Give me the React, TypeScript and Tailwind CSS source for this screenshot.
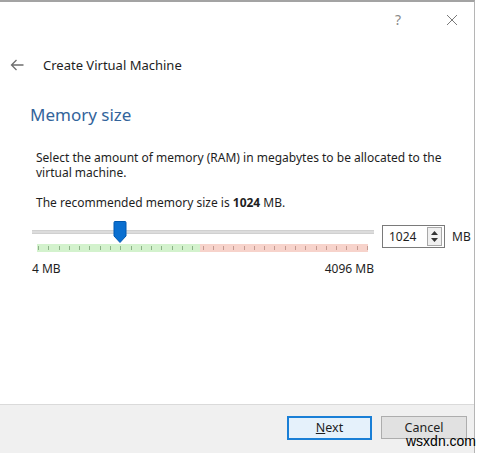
import React from "react";

const ticks = Array.from({ length: 33 }, (_, i) => i);

export default function App() {
  const font = { fontFamily: '"Noto Sans", "Open Sans", sans-serif' };
  return (
    <div className="w-[480px] h-[453px] bg-white relative overflow-hidden" style={font}>
      <div className="w-[475px] h-[453px] border-t-2 border-r border-t-[#a3a3a3] border-r-[#b5b5b5] flex flex-col text-[#1e1e1e]">
        {/* title bar */}
        <div className="h-[36px] flex items-center justify-end pr-[12px] gap-[34px] text-[#8a8a8a]">
          <div className="w-[20px] text-center text-[14px] leading-none">?</div>
          <div className="w-[20px] flex justify-center">
            <svg width="12" height="12" viewBox="0 0 12 12" stroke="#7a7a7a" strokeWidth="1" fill="none">
              <path d="M1 1 L11 11 M11 1 L1 11" />
            </svg>
          </div>
        </div>
        {/* header */}
        <div className="mt-[15px] h-[24px] flex items-center">
          <div className="w-[43px] pl-[10px] flex items-center">
            <svg width="14" height="12" viewBox="0 0 14 12" fill="none" stroke="#6e6e6e" strokeWidth="1.3">
              <path d="M13.5 6 H1.5 M6.5 1 L1.5 6 L6.5 11" />
            </svg>
          </div>
          <div className="text-[13px] leading-[24px]">Create Virtual Machine</div>
        </div>
        {/* heading */}
        <div className="mt-[28px] pl-[30px] text-[17px] leading-[20px] text-[#33649b]">Memory size</div>
        {/* description */}
        <div className="mt-[25px] pl-[36px] pr-[20px] text-[12px] leading-[15px]">
          Select the amount of memory (RAM) in megabytes to be allocated to the virtual machine.
        </div>
        <div className="mt-[15px] pl-[36px] text-[12px] leading-[15px]">
          The recommended memory size is <span className="font-bold">1024</span> MB.
        </div>
        {/* slider row */}
        <div className="mt-[11px] pl-[32px] flex items-start">
          <div className="w-[342px] h-[32px] relative">
            <div className="mt-[9px] h-[4px] bg-[#dcdcdc] border-y border-[#d0d0d0]" />
            <div className="mt-[10px] ml-[5px] w-[331px] h-[8px] flex">
              <div className="w-[163px] h-full bg-[#d3f2cd]" />
              <div className="flex-1 h-full bg-[#f7d3cb]" />
            </div>
            <div className="absolute left-[6px] top-[24px] w-[329px] h-[6px]">
              {ticks.map((i) => (
                <div
                  key={i}
                  className={i < 16 ? "absolute top-[1px] w-px h-[4px] bg-[#8cb287]" : "absolute top-[1px] w-px h-[4px] bg-[#c39a91]"}
                  style={{ left: `${(i * 329) / 32}px` }}
                />
              ))}
            </div>
            <svg className="absolute left-[81px] top-0" width="14" height="22" viewBox="0 0 14 22">
              <path d="M1 1.5 Q1 0.5 2 0.5 H12 Q13 0.5 13 1.5 V15 L7 21.5 L1 15 Z" fill="#0a6fd0" stroke="#0058b0" strokeWidth="1" />
            </svg>
          </div>
          <div className="ml-[8px] mt-[4px] w-[63px] h-[23px] border border-[#7a7a7a] bg-white flex items-center">
            <div className="flex-1 pl-[6px] text-[12px] leading-none">1024</div>
            <div className="w-[15px] h-[19px] mr-[2px] border border-[#a8a8a8] bg-[#f0f0f0] flex flex-col items-center justify-center gap-[3px]">
              <svg width="7" height="4" viewBox="0 0 7 4"><path d="M0 4 L3.5 0 L7 4 Z" fill="#333" /></svg>
              <svg width="7" height="4" viewBox="0 0 7 4"><path d="M0 0 L3.5 4 L7 0 Z" fill="#333" /></svg>
            </div>
          </div>
          <div className="ml-[7px] mt-[4px] h-[23px] flex items-center text-[12px]">MB</div>
        </div>
        <div className="mt-[8px] pl-[32px] w-[374px] flex justify-between text-[12px] leading-[15px]">
          <span>4 MB</span>
          <span>4096 MB</span>
        </div>
        <div className="flex-1" />
        {/* footer */}
        <div className="h-[49px] border-t border-[#dadada] bg-[#f0f0f0] flex items-start justify-end pt-[11px] pr-[7px] gap-[9px]">
          <div className="w-[85px] h-[24px] border-2 border-[#1a7fd6] bg-[#e5f1fb] flex items-center justify-center text-[12.5px]">
            <span><span className="underline">N</span>ext</span>
          </div>
          <div className="w-[86px] h-[23px] border border-[#adadad] bg-[#e1e1e1] flex items-start justify-center pt-[2px] text-[12.5px]">
            Cancel
          </div>
        </div>
      </div>
      <div
        className="absolute left-[406px] top-[433px] text-[14px] leading-[16px] text-black"
        style={{ fontFamily: '"Liberation Sans", Arial, sans-serif' }}
      >
        wsxdn.com
      </div>
    </div>
  );
}
